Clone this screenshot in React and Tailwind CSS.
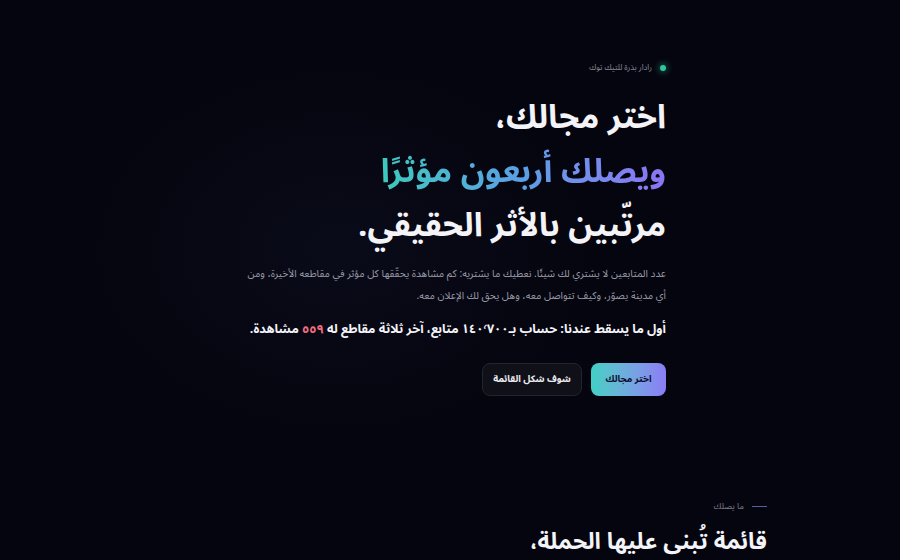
export default function App() {
  return (
    <div dir="rtl" className="relative w-full h-[560px] overflow-hidden bg-[#05050f] text-white font-['Noto_Sans_Arabic','DejaVu_Sans',sans-serif]">
      <div className="pointer-events-none absolute left-[80px] top-[60px] w-[520px] h-[380px] rounded-full bg-[radial-gradient(closest-side,rgba(70,80,140,0.08),transparent)]" />
      <div className="relative mx-auto w-[634px]">
        <section className="mr-[101px] w-[430px] pt-[62px]">
          <div className="flex items-center gap-[8px]">
            <span className="w-[6px] h-[6px] rounded-full bg-[#2fc79d] shadow-[0_0_6px_2px_rgba(47,199,157,0.35)]" />
            <span className="text-[8px] text-[#8a8b98]">رادار بذرة للتيك توك</span>
          </div>
          <h1 className="mt-[17px] text-[33px] font-bold leading-[54px] text-[#f3f3f8]">
            <span className="block">اختر مجالك،</span>
            <span className="block"><span className="bg-gradient-to-l from-[#8a74f3] via-[#5b9ee6] to-[#3cc9bd] bg-clip-text text-transparent">ويصلك أربعون مؤثرًا</span></span>
            <span className="block">مرتّبين بالأثر الحقيقي.</span>
          </h1>
          <p className="mt-[10px] text-[10.2px] leading-[22px] text-[#9a9ba8]">
            عدد المتابعين لا يشتري لك شيئًا. نعطيك ما يشتريه: كم مشاهدة يحقّقها كل مؤثر في مقاطعه الأخيرة، ومن أي مدينة يصوّر، وكيف تتواصل معه، وهل يحق لك الإعلان معه.
          </p>
          <p className="mt-[13px] text-[12.6px] font-bold text-[#f3f3f8] whitespace-nowrap">
            أول ما يسقط عندنا: حساب بـ١٤٠٬٧٠٠ متابع، آخر ثلاثة مقاطع له <span className="text-[#f26d7d]">٥٥٩</span> مشاهدة.
          </p>
          <div className="mt-[24px] flex gap-[9px]">
            <button className="h-[33px] w-[75px] rounded-[8px] bg-gradient-to-l from-[#8a7cf5] to-[#3fd0c4] text-[9.5px] font-bold text-[#0d1030]">اختر مجالك</button>
            <button className="h-[33px] w-[100px] rounded-[8px] border border-[#24242e] bg-[#101018] text-[9.5px] font-bold text-[#ececf2]">شوف شكل القائمة</button>
          </div>
        </section>
        <section className="mt-[104px]">
          <div className="flex items-center gap-[8px]">
            <span className="w-[15px] h-px bg-[#5660a0]" />
            <span className="text-[8.5px] text-[#7d7e8c]">ما يصلك</span>
          </div>
          <h2 className="mt-[12px] text-[23px] font-bold text-[#f3f3f8]">قائمة تُبنى عليها الحملة،</h2>
        </section>
      </div>
    </div>
  );
}
